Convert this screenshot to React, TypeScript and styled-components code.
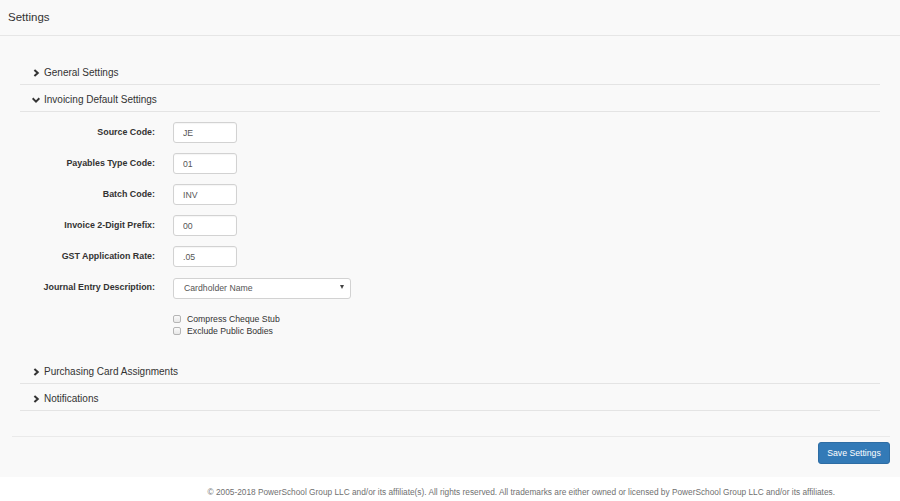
import React from "react";
import styled, { createGlobalStyle } from "styled-components";

const Global = createGlobalStyle`
  html, body { margin: 0; padding: 0; }
  body {
    font-family: "Liberation Sans", Arial, sans-serif;
    color: #333;
    background: #fff;
  }
  * { box-sizing: border-box; }
`;

const Page = styled.div`
  width: 900px;
  height: 501px;
  display: flex;
  flex-direction: column;
`;

const Shell = styled.div`
  background: #f9f9f9;
  display: flex;
  flex-direction: column;
`;

const TopBar = styled.header`
  height: 36px;
  padding: 11px 8px 0;
  font-size: 11.5px;
  line-height: 13px;
  color: #333;
  border-bottom: 1px solid #e6e6e6;
`;

const Main = styled.main`
  padding-top: 22px;
  display: flex;
  flex-direction: column;
`;

const Accordion = styled.div`
  margin: 0 20px;
  display: flex;
  flex-direction: column;
`;

const Section = styled.section``;

const SectionHeader = styled.div`
  display: flex;
  align-items: center;
  gap: 4px;
  height: 27px;
  padding: 9px 0 5px 12px;
  font-size: 10px;
  line-height: 12px;
  color: #333;
  border-bottom: 1px solid #e4e4e4;
`;

const Chevron = styled.svg`
  width: 8px;
  height: 8px;
  flex: none;
  display: block;
`;

const SectionBody = styled.div`
  padding: 10px 0 20px;
`;

const FormGrid = styled.div`
  display: grid;
  grid-template-columns: 135px auto;
  column-gap: 18px;
  row-gap: 10px;
  align-items: center;
  justify-items: start;
`;

const Label = styled.label`
  justify-self: end;
  font-size: 8.9px;
  font-weight: bold;
  line-height: 21px;
  color: #333;
`;

const TextInput = styled.input`
  width: 64px;
  height: 21px;
  padding: 0 9px;
  border: 1px solid #d2d2d2;
  border-radius: 3px;
  background: #fff;
  font-family: "Liberation Sans", Arial, sans-serif;
  font-size: 8.7px;
  color: #555;
  box-shadow: inset 0 1px 1px rgba(0, 0, 0, 0.04);
  outline: none;
`;

const SelectWrap = styled.div`
  position: relative;
  width: 178px;
  height: 21px;
`;

const Select = styled.select`
  appearance: none;
  -webkit-appearance: none;
  width: 100%;
  height: 100%;
  padding: 0 10px;
  border: 1px solid #d2d2d2;
  border-radius: 3px;
  background: #fff;
  font-family: "Liberation Sans", Arial, sans-serif;
  font-size: 8.7px;
  color: #555;
  outline: none;
`;

const Caret = styled.span`
  position: absolute;
  right: 7px;
  top: 8px;
  width: 0;
  height: 0;
  border-left: 2.5px solid transparent;
  border-right: 2.5px solid transparent;
  border-top: 4px solid #444;
  pointer-events: none;
`;

const Checks = styled.div`
  grid-column: 2;
  margin-top: 5px;
  display: flex;
  flex-direction: column;
`;

const CheckRow = styled.label`
  display: flex;
  align-items: center;
  gap: 6px;
  height: 12px;
  font-size: 8.7px;
  color: #333;
`;

const Box = styled.input`
  appearance: none;
  -webkit-appearance: none;
  margin: 0;
  width: 8px;
  height: 8px;
  border: 1px solid #b5b5b5;
  border-radius: 2px;
  background: linear-gradient(#fafafa, #e8e8e8);
`;

const ActionBar = styled.div`
  margin: 25px 10px 0 12px;
  border-top: 1px solid #eaeaea;
  padding: 5px 0 13px;
  display: flex;
  justify-content: flex-end;
`;

const SaveButton = styled.button`
  width: 72px;
  height: 22px;
  padding: 0;
  border: 1px solid #2e6da4;
  border-radius: 3px;
  background: #337ab7;
  color: #fff;
  font-family: "Liberation Sans", Arial, sans-serif;
  font-size: 8.7px;
`;

const Footer = styled.footer`
  flex: 1;
  background: #fff;
  padding: 10px 65px 0 0;
  text-align: right;
  font-size: 8.3px;
  line-height: 10px;
  color: #707070;
  white-space: nowrap;
`;

const ChevronRight = () => (
  <Chevron viewBox="0 0 8 8">
    <path d="M2.4 0.9 L5.8 4 L2.4 7.1" fill="none" stroke="#333" strokeWidth="2" />
  </Chevron>
);

const ChevronDown = () => (
  <Chevron viewBox="0 0 8 8">
    <path d="M0.6 2.3 L4 5.6 L7.4 2.3" fill="none" stroke="#333" strokeWidth="2" />
  </Chevron>
);

const fields = [
  { label: "Source Code:", value: "JE" },
  { label: "Payables Type Code:", value: "01" },
  { label: "Batch Code:", value: "INV" },
  { label: "Invoice 2-Digit Prefix:", value: "00" },
  { label: "GST Application Rate:", value: ".05" },
];

export default function App() {
  return (
    <Page>
      <Global />
      <Shell>
        <TopBar>Settings</TopBar>
        <Main>
          <Accordion>
            <Section>
              <SectionHeader>
                <ChevronRight />
                General Settings
              </SectionHeader>
            </Section>
            <Section>
              <SectionHeader>
                <ChevronDown />
                Invoicing Default Settings
              </SectionHeader>
              <SectionBody>
                <FormGrid>
                  {fields.map((f) => (
                    <React.Fragment key={f.label}>
                      <Label>{f.label}</Label>
                      <TextInput defaultValue={f.value} />
                    </React.Fragment>
                  ))}
                  <Label>Journal Entry Description:</Label>
                  <SelectWrap>
                    <Select defaultValue="Cardholder Name">
                      <option>Cardholder Name</option>
                    </Select>
                    <Caret />
                  </SelectWrap>
                  <Checks>
                    <CheckRow>
                      <Box type="checkbox" />
                      Compress Cheque Stub
                    </CheckRow>
                    <CheckRow>
                      <Box type="checkbox" />
                      Exclude Public Bodies
                    </CheckRow>
                  </Checks>
                </FormGrid>
              </SectionBody>
            </Section>
            <Section>
              <SectionHeader>
                <ChevronRight />
                Purchasing Card Assignments
              </SectionHeader>
            </Section>
            <Section>
              <SectionHeader>
                <ChevronRight />
                Notifications
              </SectionHeader>
            </Section>
          </Accordion>
          <ActionBar>
            <SaveButton>Save Settings</SaveButton>
          </ActionBar>
        </Main>
      </Shell>
      <Footer>
        © 2005-2018 PowerSchool Group LLC and/or its affiliate(s). All rights reserved. All trademarks are either owned or licensed by PowerSchool Group LLC and/or its affiliates.
      </Footer>
    </Page>
  );
}
